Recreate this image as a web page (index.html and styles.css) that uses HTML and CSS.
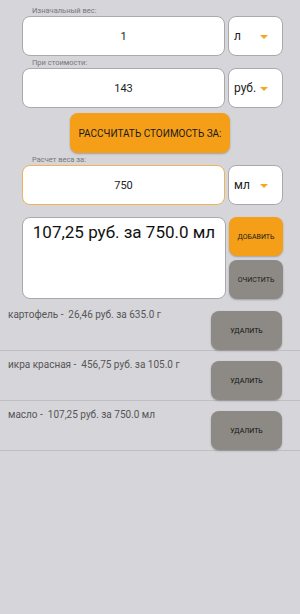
FILE: index.html
```html
<!DOCTYPE html>
<html lang="ru">
<head>
    <meta charset="UTF-8">
    <meta name="viewport" content="width=device-width, initial-scale=1.0">
    <title>Калькулятор стоимости</title>
    <link rel="stylesheet" href="styles.css">
</head>
<body>
    <div class="form">
        <div class="label">Изначальный вес:</div>
        <div class="row">
            <div class="field">1</div>
            <div class="select">л<span class="arrow"></span></div>
        </div>
        <div class="label">При стоимости:</div>
        <div class="row">
            <div class="field">143</div>
            <div class="select">руб.<span class="arrow"></span></div>
        </div>
        <button class="calcBtn">РАССЧИТАТЬ СТОИМОСТЬ ЗА:</button>
        <div class="label">Расчет веса за:</div>
        <div class="row">
            <div class="field active">750</div>
            <div class="select">мл<span class="arrow"></span></div>
        </div>
        <div class="resultRow">
            <div class="result">107,25 руб. за 750.0 мл</div>
            <div class="actions">
                <button class="smallBtn add">ДОБАВИТЬ</button>
                <button class="smallBtn clear">ОЧИСТИТЬ</button>
            </div>
        </div>
    </div>

    <ul class="list">
        <li class="item">
            <span class="itemText">картофель -&nbsp; 26,46 руб. за 635.0 г</span>
            <button class="delBtn">УДАЛИТЬ</button>
        </li>
        <li class="item">
            <span class="itemText">икра красная -&nbsp; 456,75 руб. за 105.0 г</span>
            <button class="delBtn">УДАЛИТЬ</button>
        </li>
        <li class="item">
            <span class="itemText">масло -&nbsp; 107,25 руб. за 750.0 мл</span>
            <button class="delBtn">УДАЛИТЬ</button>
        </li>
    </ul>
</body>
</html>
```
FILE: styles.css
```css
* {
    box-sizing: border-box;
}
body {
    margin: 0;
    background-color: #d6d5da;
    font-family: Roboto, "Noto Sans", sans-serif;
    color: #222;
    height: 614px;
}
.form {
    padding: 5px 17px 0 22px;
}
.label {
    font-size: 7.5px;
    color: #777;
    padding-left: 10px;
    height: 11px;
    line-height: 11px;
}
.row {
    display: flex;
    gap: 3px;
    height: 40px;
    margin-bottom: 1px;
}
.field {
    flex: 1;
    background-color: #fff;
    border: 1px solid #a9a8ac;
    border-radius: 8px;
    display: flex;
    align-items: center;
    justify-content: center;
    font-size: 11px;
    color: #222;
}
.field.active {
    border-color: #f0b25a;
}
.select {
    width: 55px;
    background-color: #fff;
    border: 1px solid #a9a8ac;
    border-radius: 8px;
    display: flex;
    align-items: center;
    padding-left: 5px;
    font-size: 12px;
    color: #222;
    position: relative;
}
.arrow {
    position: absolute;
    right: 14px;
    top: 18px;
    width: 0;
    height: 0;
    border-left: 4px solid transparent;
    border-right: 4px solid transparent;
    border-top: 4px solid #f5a623;
}
.calcBtn {
    display: block;
    width: 160px;
    height: 40px;
    margin: 5px 0 1px 48px;
    padding: 0;
    background-color: #f59f18;
    border: none;
    border-radius: 8px;
    font-family: Roboto, sans-serif;
    font-size: 10px;
    white-space: nowrap;
    color: #1a1a1a;
    box-shadow: 0 1px 2px rgba(0,0,0,0.25);
}
.resultRow {
    display: flex;
    gap: 3px;
    margin-top: 12px;
    height: 82px;
}
.result {
    flex: 1;
    background-color: #fff;
    border: 1px solid #a9a8ac;
    border-radius: 8px;
    font-size: 17px;
    text-align: center;
    padding-top: 4px;
    color: #111;
}
.actions {
    width: 54px;
    display: flex;
    flex-direction: column;
    gap: 4px;
}
.smallBtn {
    flex: 1;
    border: none;
    border-radius: 8px;
    font-family: Roboto, sans-serif;
    font-size: 7px;
    color: #1a1a1a;
    padding: 0;
    box-shadow: 0 1px 2px rgba(0,0,0,0.25);
}
.add {
    background-color: #f59f18;
}
.clear {
    background-color: #8d8a86;
}
.list {
    list-style: none;
    margin: 2px 0 0;
    padding: 0;
}
.item {
    display: flex;
    justify-content: space-between;
    align-items: flex-start;
    height: 50px;
    border-bottom: 1.5px solid #bfbec3;
    padding: 8px 18px 0 8px;
}
.itemText {
    font-size: 10px;
    color: #555;
}
.delBtn {
    width: 71px;
    height: 39px;
    margin-top: 2px;
    background-color: #8d8a86;
    border: none;
    border-radius: 8px;
    font-family: Roboto, sans-serif;
    font-size: 7px;
    color: #111;
    box-shadow: 0 1px 2px rgba(0,0,0,0.25);
}
```
